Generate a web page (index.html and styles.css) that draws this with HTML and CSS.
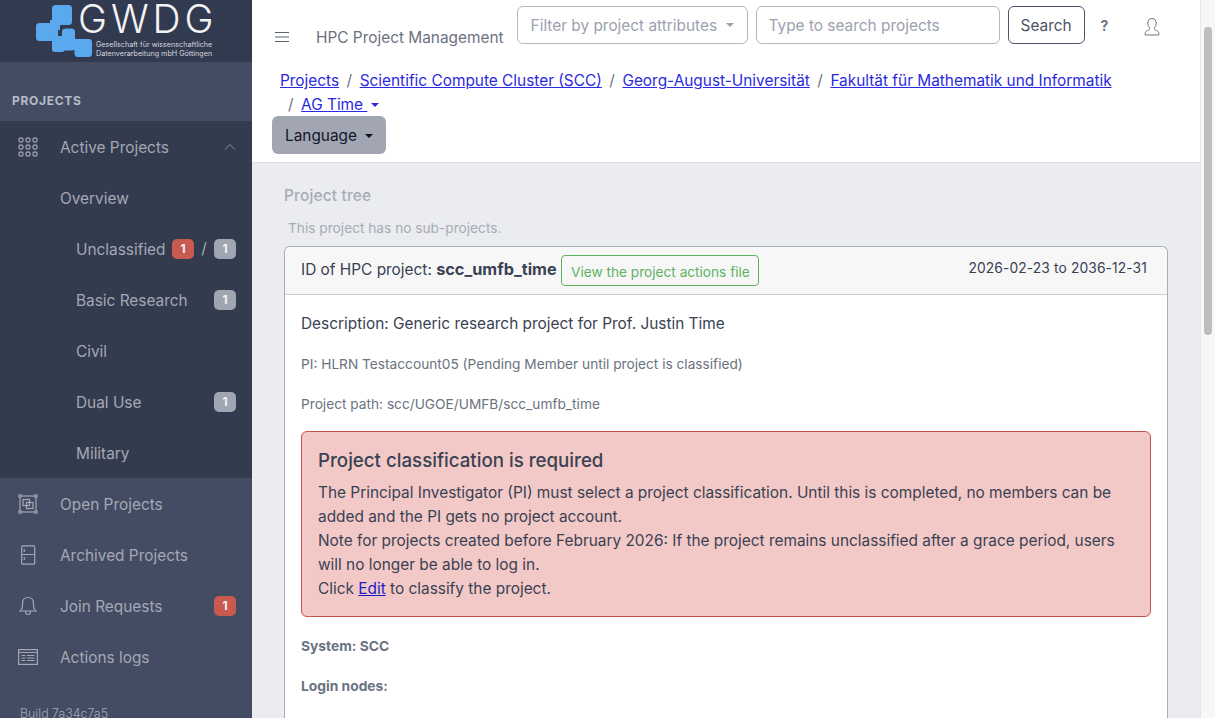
FILE: index.html
```html
<!DOCTYPE html>
<html lang="en">
<head>
<meta charset="utf-8">
<title>HPC Project Management</title>
<link rel="stylesheet" href="styles.css">
</head>
<body>
<div class="app">
  <aside class="sidebar">
    <div class="brand">
      <svg class="logo-mark" viewBox="36 5 56 52" width="56" height="52">
        <g fill="#5aa9ee">
          <rect x="52" y="5" width="20" height="20" rx="3.500"/>
          <rect x="36" y="23" width="22" height="18" rx="3.500"/>
          <rect x="50" y="20" width="10" height="10"/>
          <rect x="52" y="36" width="13" height="16" rx="3"/>
          <rect x="62" y="28.500" width="13" height="22" rx="3.500"/>
          <rect x="70" y="39" width="8" height="11"/>
          <rect x="74.500" y="39" width="17.500" height="18" rx="3.500"/>
        </g>
      </svg>
      <div class="logo-text">
        <div class="logo-word">GWDG</div>
        <div class="logo-sub">Gesellschaft für wissenschaftliche</div>
        <div class="logo-sub">Datenverarbeitung mbH Göttingen</div>
      </div>
    </div>
    <div class="nav-heading">PROJECTS</div>
    <div class="nav-active">
      <div class="nav-row">
        <svg class="nav-icon" viewBox="0 0 20 20"><g fill="none" stroke="currentColor" stroke-width="1.100"><circle cx="3" cy="3" r="2.100"/><circle cx="10" cy="3" r="2.100"/><circle cx="17" cy="3" r="2.100"/><circle cx="3" cy="10" r="2.100"/><circle cx="10" cy="10" r="2.100"/><circle cx="17" cy="10" r="2.100"/><circle cx="3" cy="17" r="2.100"/><circle cx="10" cy="17" r="2.100"/><circle cx="17" cy="17" r="2.100"/></g></svg>
        <span class="nav-label">Active Projects</span>
        <svg class="chevron" viewBox="0 0 12 8"><path d="M1 6.500 6 1.500l5 5" fill="none" stroke="currentColor" stroke-width="1"/></svg>
      </div>
      <div class="nav-row"><span class="nav-label indent1">Overview</span></div>
      <div class="nav-row"><span class="nav-label indent2">Unclassified</span><span class="badges"><span class="badge red">1</span><span class="slash">/</span><span class="badge grey">1</span></span></div>
      <div class="nav-row"><span class="nav-label indent2">Basic Research</span><span class="badges"><span class="badge grey">1</span></span></div>
      <div class="nav-row"><span class="nav-label indent2">Civil</span></div>
      <div class="nav-row"><span class="nav-label indent2">Dual Use</span><span class="badges"><span class="badge grey">1</span></span></div>
      <div class="nav-row"><span class="nav-label indent2">Military</span></div>
    </div>
    <div class="nav-row">
      <svg class="nav-icon" viewBox="0 0 20 20"><g fill="none" stroke="currentColor" stroke-width="1.200"><rect x="2" y="2" width="16" height="16"/><circle cx="2" cy="2" r="1.300" fill="#434c63"/><circle cx="18" cy="2" r="1.300" fill="#434c63"/><circle cx="2" cy="18" r="1.300" fill="#434c63"/><circle cx="18" cy="18" r="1.300" fill="#434c63"/><rect x="5" y="5.500" width="6.500" height="6"/><rect x="8.500" y="8.500" width="6.500" height="6"/></g></svg>
      <span class="nav-label">Open Projects</span>
    </div>
    <div class="nav-row">
      <svg class="nav-icon" viewBox="0 0 20 20"><g fill="none" stroke="currentColor" stroke-width="1.200"><rect x="3.700" y="0.800" width="13" height="18.400" rx="1"/><path d="M3.700 9.500h13M6.300 4v3M6.300 12v3"/></g></svg>
      <span class="nav-label">Archived Projects</span>
    </div>
    <div class="nav-row">
      <svg class="nav-icon" viewBox="0 0 20 20"><path fill="none" stroke="currentColor" stroke-width="1.200" d="M10 1.500c-3.500 0-5.500 2.500-5.500 6v3c0 2-1.200 3.500-2.500 4.500h16c-1.300-1-2.500-2.500-2.500-4.500v-3c0-3.500-2-6-5.500-6zM7.500 15c0 2 1 3.500 2.500 3.500s2.500-1.500 2.500-3.500"/></svg>
      <span class="nav-label">Join Requests</span>
      <span class="badges"><span class="badge red">1</span></span>
    </div>
    <div class="nav-row">
      <svg class="nav-icon" viewBox="0 0 20 20"><g fill="none" stroke="currentColor" stroke-width="1.200"><rect x="0.600" y="2.600" width="18.800" height="14.800"/><path d="M1 5.500h18M3.500 8.500h4M9 8.500h7.500M3.500 11h4M9 11h7.500M3.500 13.500h4M9 13.500h7.500"/></g></svg>
      <span class="nav-label">Actions logs</span>
    </div>
    <div class="build">Build 7a34c7a5</div>
  </aside>

  <main class="main">
    <header class="topbar">
      <div class="toprow">
        <svg class="burger" viewBox="0 0 16 12"><path d="M1 1.500h14M1 6h14M1 10.500h14" stroke="#5b6271" stroke-width="1.100" fill="none"/></svg>
        <span class="app-title">HPC Project Management</span>
        <div class="field filter">Filter by project attributes<span class="caret caret-light"></span></div>
        <div class="field search">Type to search projects</div>
        <button class="btn-search">Search</button>
        <span class="help">?</span>
        <svg class="user" viewBox="0 0 18 20"><path fill="none" stroke="#6b7280" stroke-width="1" d="M9 1.500c-2.700 0-4.200 2-4.200 4.500 0 2 .8 3.700 1.900 4.800.3.900-.1 1.700-1 2.200-1.800.8-3.500 1.600-3.500 3.400v1.600h13.600v-1.600c0-1.800-1.700-2.600-3.500-3.400-.9-.5-1.300-1.300-1-2.200 1.100-1.100 1.900-2.800 1.900-4.800 0-2.500-1.500-4.500-4.200-4.500z"/></svg>
      </div>
      <nav class="crumbs">
        <a href="#">Projects</a><span class="sep">/</span><a href="#">Scientific Compute Cluster (SCC)</a><span class="sep">/</span><a href="#">Georg-August-Universität</a><span class="sep">/</span><a href="#">Fakultät für Mathematik und Informatik</a>
        <br><span class="sep first">/</span><a href="#">AG Time </a><span class="caret caret-blue"></span>
      </nav>
      <button class="btn-lang">Language<span class="caret caret-dark"></span></button>
    </header>

    <section class="content">
      <h2 class="tree-title">Project tree</h2>
      <p class="tree-note">This project has no sub-projects.</p>
      <div class="card">
        <div class="card-head">
          <span class="card-id">ID of HPC project: <strong>scc_umfb_time</strong></span>
          <a class="btn-file" href="#">View the project actions file</a>
          <span class="dates">2026-02-23 to 2036-12-31</span>
        </div>
        <div class="card-body">
          <p class="desc">Description: Generic research project for Prof. Justin Time</p>
          <p class="meta first-meta">PI: HLRN Testaccount05 (Pending Member until project is classified)</p>
          <p class="meta">Project path: scc/UGOE/UMFB/scc_umfb_time</p>
          <div class="alert">
            <h4>Project classification is required</h4>
            <p>The Principal Investigator (PI) must select a project classification. Until this is completed, no members can be added and the PI gets no project account.</p>
            <p>Note for projects created before February 2026: If the project remains unclassified after a grace period, users will no longer be able to log in.</p>
            <p>Click <a href="#">Edit</a> to classify the project.</p>
          </div>
          <p class="field-label">System: SCC</p>
          <p class="field-label">Login nodes:</p>
        </div>
      </div>
    </section>
  </main>

  <div class="scrollbar"><div class="thumb"></div></div>
</div>
</body>
</html>
```

FILE: styles.css
```css
* { box-sizing: border-box; }
html, body { margin: 0; height: 100%; overflow: hidden; }
body { font-family: Inter, "Liberation Sans", sans-serif; font-size: 15.400px; color: #3a4153; }
.app { display: flex; height: 718px; overflow: hidden; }

.sidebar { width: 252px; flex: none; background: #434c63; color: #a4a8b5; display: flex; flex-direction: column; }
.brand { height: 62px; flex: none; background: #323a4f; display: flex; align-items: flex-start; padding-left: 36px; }
.logo-mark { flex: none; margin-top: 5px; }
.logo-text { margin-left: -13px; color: #f2f3f5; }
.logo-word { font-size: 39px; line-height: 36px; letter-spacing: 3.900px; font-weight: 300; margin: 1px 0 0 -1px; }
.logo-sub { font-size: 7.200px; line-height: 9px; color: #d5d8df; padding-left: 17px; white-space: nowrap; }
.logo-word + .logo-sub { margin-top: 3px; }
.nav-heading { height: 59px; flex: none; padding: 31px 12px 0; font-size: 12px; line-height: 16px; font-weight: 700; letter-spacing: .7px; color: #b8bcc7; }
.nav-active { background: #333b4e; }
.nav-row { height: 51px; flex: none; display: flex; align-items: center; padding: 0 16px 0 18px; }
.nav-icon { width: 20px; height: 20px; flex: none; margin-right: 22px; }
.nav-label { white-space: nowrap; padding-top: 2px; }
.indent1 { margin-left: 42px; }
.indent2 { margin-left: 58px; }
.chevron { width: 12px; height: 8px; margin-left: auto; color: #878c9a; }
.badges { margin-left: auto; display: flex; align-items: center; }
.badge { width: 22px; height: 20px; border-radius: 5px; display: flex; align-items: center; justify-content: center; font-size: 12px; font-weight: 700; color: #f4f4f6; }
.badge.red { background: #c85a50; }
.badge.grey { background: #a0a5b2; }
.slash { width: 20px; text-align: center; }
.build { font-size: 12.400px; line-height: 16px; padding: 24px 0 0 20px; color: #a4a8b5; font-weight: 300; }

.main { flex: 1; min-width: 0; background: #ebecef; display: flex; flex-direction: column; }
.topbar { background: #fff; border-bottom: 1px solid #dcdee3; height: 163px; flex: none; padding: 6px 20px 0; }
.toprow { display: flex; align-items: flex-start; height: 38px; }
.burger { width: 16px; height: 12px; margin: 25px 0 0 2px; flex: none; }
.app-title { margin: 22px 0 0 26px; color: #6b7280; white-space: nowrap; line-height: 20px; }
.field { height: 38px; border: 1px solid #b4b8c2; border-radius: 6px; padding: 0 12px; display: flex; align-items: center; color: #9ca1ae; white-space: nowrap; background: #fff; }
.filter { width: 231px; margin-left: 13px; padding-left: 13px; }
.search { width: 244px; margin-left: 8px; }
.btn-search { width: 77px; height: 38px; margin-left: 8px; border: 1px solid #4b5468; border-radius: 6px; background: #fff; color: #4b5468; font: inherit; padding: 0; }
.help { margin-left: 16px; font-size: 14px; font-weight: 700; color: #6b7280; line-height: 40px; }
.user { width: 18px; height: 20px; margin: 11px 0 0 35px; flex: none; }
.caret { display: inline-block; width: 0; height: 0; border-left: 4.500px solid transparent; border-right: 4.500px solid transparent; border-top: 4.500px solid currentColor; }
.caret-light { margin-left: 9px; color: #9ca1ae; }
.caret-blue { margin-left: 4px; color: #2a2ae0; vertical-align: 3px; }
.caret-dark { margin-left: 8px; color: #111; vertical-align: 3px; }
.crumbs { margin: 25px 0 -1px 8px; line-height: 24px; color: #6b7280; }
.crumbs a { color: #2a2ae0; }
.alert a { color: #1c1cc4; }
.sep { margin: 0 7.500px; }
.sep.first { margin-left: 8px; }
.btn-lang { display: block; width: 114px; height: 38px; border: 0; border-radius: 6px; background: #a2a6b3; color: #111827; font: inherit; padding: 0; }

.content { padding: 0 32px; flex: 1; min-height: 0; overflow: hidden; }
.tree-title { margin: 23px 0 0; font-size: 15.400px; line-height: 20px; font-weight: 500; letter-spacing: .2px; color: #a7abb6; }
.tree-note { margin: 13px 0 0 4px; font-size: 13.700px; line-height: 18px; color: #a7abb6; }
.card { margin-top: 9px; background: #fff; border: 1px solid #a8acb8; border-bottom: 0; border-radius: 6px 6px 0 0; height: 600px; }
.card-head { display: flex; align-items: center; height: 48px; padding: 0 20px 0 16px; background: #f7f7f8; border-bottom: 1px solid #c9ccd3; border-radius: 6px 6px 0 0; }
.card-id { white-space: nowrap; margin-bottom: 4px; }
.card-id strong { font-weight: 700; font-size: 16.300px; }
.btn-file { margin-left: 4px; height: 31px; padding: 2px 8.500px 0 9.500px; display: flex; align-items: center; border: 1px solid #5fb25f; border-radius: 4px; color: #5fb25f; font-size: 13.650px; text-decoration: none; white-space: nowrap; background: #f7f7f8; }
.dates { margin: 0 0 5px auto; font-size: 13.800px; letter-spacing: .12px; }
.card-body { padding: 18px 16px; }
.desc { margin: 0; line-height: 21px; }
.meta { margin: 19px 0 0; font-size: 13.700px; line-height: 21px; color: #6b7280; }
.first-meta { margin-top: 20px; }
.alert { margin-top: 16px; padding: 16px 16px; background: #f2c9c6; border: 1px solid #c9524a; border-radius: 6px; height: 186px; line-height: 24px; }
.alert h4 { margin: 0 0 7px; font-size: 18.700px; line-height: 26px; font-weight: 500; }
.alert p { margin: 0; }
.field-label { margin: 19px 0 0; font-size: 13.800px; line-height: 21px; font-weight: 700; color: #6b7280; }
.scrollbar { width: 15px; flex: none; background: #f7f7f7; border-left: 1px solid #e6e6e6; padding: 27px 3px 0; }
.thumb { height: 308px; background: #bdbdbd; border-radius: 4px; }
```
